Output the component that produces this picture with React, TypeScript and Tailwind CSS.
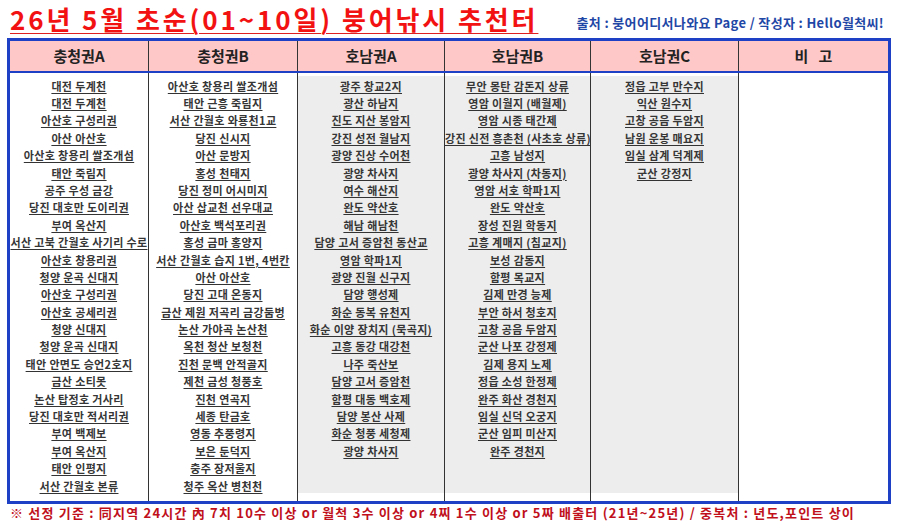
import React from "react";

const colA = [
  "대전 두계천",
  "대전 두계천",
  "아산호 구성리권",
  "아산 아산호",
  "아산호 창용리 쌀조개섬",
  "태안 죽림지",
  "공주 우성 금강",
  "당진 대호만 도이리권",
  "부여 옥산지",
  "서산 고북 간월호 사기리 수로",
  "아산호 창용리권",
  "청양 운곡 신대지",
  "아산호 구성리권",
  "아산호 공세리권",
  "청양 신대지",
  "청양 운곡 신대지",
  "태안 안면도 승언2호지",
  "금산 소티못",
  "논산 탑정호 거사리",
  "당진 대호만 적서리권",
  "부여 백제보",
  "부여 옥산지",
  "태안 인평지",
  "서산 간월호 본류",
];

const colB = [
  "아산호 창용리 쌀조개섬",
  "태안 근흥 죽림지",
  "서산 간월호 와룡천1교",
  "당진 신시지",
  "아산 문방지",
  "홍성 천태지",
  "당진 정미 어시미지",
  "아산 삽교천 선우대교",
  "아산호 백석포리권",
  "홍성 금마 홍양지",
  "서산 간월호 습지 1번, 4번칸",
  "아산 아산호",
  "당진 고대 온동지",
  "금산 제원 저곡리 금강둠벙",
  "논산 가야곡 논산천",
  "옥천 청산 보청천",
  "진천 문백 안적골지",
  "제천 금성 청풍호",
  "진천 연곡지",
  "세종 탄금호",
  "영동 추풍령지",
  "보은 둔덕지",
  "충주 장저울지",
  "청주 옥산 병천천",
];

const colC = [
  "광주 창교2지",
  "광산 하남지",
  "진도 지산 봉암지",
  "강진 성전 월남지",
  "광양 진상 수어천",
  "광양 차사지",
  "여수 해산지",
  "완도 약산호",
  "해남 해남천",
  "담양 고서 증암천 동산교",
  "영암 학파1지",
  "광양 진월 신구지",
  "담양 행성제",
  "화순 동복 유천지",
  "화순 이양 장치지 (묵곡지)",
  "고흥 동강 대강천",
  "나주 죽산보",
  "담양 고서 증암천",
  "함평 대동 백호제",
  "담양 봉산 사제",
  "화순 청풍 세청제",
  "광양 차사지",
];

const colD = [
  "무안 몽탄 감돈지 상류",
  "영암 이월지 (배월제)",
  "영암 시종 태간제",
  "강진 신전 흥촌천 (사초호 상류)",
  "고흥 남성지",
  "광양 차사지 (차동지)",
  "영암 서호 학파1지",
  "완도 약산호",
  "장성 진원 학동지",
  "고흥 계매지 (침교지)",
  "보성 감동지",
  "함평 목교지",
  "김제 만경 능제",
  "부안 하서 청호지",
  "고창 공음 두암지",
  "군산 나포 강정제",
  "김제 용지 노제",
  "정읍 소성 한정제",
  "완주 화산 경천지",
  "임실 신덕 오궁지",
  "군산 임피 미산지",
  "완주 경천지",
];

const colE = [
  "정읍 고부 만수지",
  "익산 원수지",
  "고창 공음 두암지",
  "남원 운봉 매요지",
  "임실 삼계 덕계제",
  "군산 강정지",
];

const font = { fontFamily: '"Noto Sans CJK KR", "Noto Sans", sans-serif' };

function Cell({ items, gray, first }: { items: string[]; gray?: boolean; first?: boolean }) {
  return (
    <div className={`flex flex-col pt-[3px] pb-[8px] ${first ? "" : "border-l border-[#333]"}`}>
      <div className={`flex-1 flex flex-col ${gray ? "bg-[#ededed]" : "bg-white"}`}>
        {items.map((t, i) => (
          <div key={i} className="h-[17.4px] leading-[17.4px] text-center whitespace-nowrap">
            <span
              className={`underline decoration-[#333] underline-offset-[2px] font-bold text-[#363636] ${
                t.length > 18 ? "text-[10.4px] tracking-[-0.3px]" : "text-[11px] tracking-[0.35px]"
              }`}
            >
              {t}
            </span>
          </div>
        ))}
      </div>
    </div>
  );
}

export default function App() {
  const headers = ["충청권A", "충청권B", "호남권A", "호남권B", "호남권C"];
  return (
    <div className="w-[900px] h-[529px] bg-white overflow-hidden" style={font}>
      <div className="flex items-end h-[38px]">
        <div className="ml-[10px] text-[26px] leading-[38px] font-bold text-[#f21212] tracking-[2.9px] underline decoration-[#e02020] decoration-1 underline-offset-[3px] whitespace-nowrap">
          26년 5월 초순(01~10일) 붕어낚시 추천터
        </div>
        <div className="ml-auto mr-[16px] mb-[7px] text-[13px] leading-[16px] font-bold tracking-[0.35px] text-[#1f47a6] whitespace-nowrap">
          출처 : 붕어어디서나와요 Page / 작성자 : Hello월척씨!
        </div>
      </div>
      <div className="ml-[7px] w-[884px] h-[466px] border-[3px] border-[#1e40c4] flex flex-col">
        <div className="grid grid-cols-[138px_149px_147px_146px_148px_150px] h-[33px] bg-[#ffc8c8] border-b-2 border-[#1e40c4]">
          {headers.map((h, i) => (
            <div
              key={h}
              className={`flex items-center justify-center text-[15px] font-bold text-[#222] ${
                i === 0 ? "" : "border-l border-[#333]"
              }`}
            >
              {h}
            </div>
          ))}
          <div className="flex items-center justify-center text-[15px] font-bold text-[#222] border-l border-[#333] whitespace-pre">
            비   고
          </div>
        </div>
        <div className="flex-1 grid grid-cols-[138px_149px_147px_146px_148px_150px]">
          <Cell items={colA} first />
          <Cell items={colB} />
          <Cell items={colC} gray />
          <Cell items={colD} gray />
          <Cell items={colE} gray />
          <Cell items={[]} />
        </div>
      </div>
      <div className="ml-[10px] mt-[1px] text-[13px] leading-[16px] font-bold tracking-[1.2px] text-[#c0101c] whitespace-nowrap">
        ※ 선정 기준 : 同지역 24시간 內 7치 10수 이상 or 월척 3수 이상 or 4찌 1수 이상 or 5짜 배출터 (21년~25년) / 중복처 : 년도,포인트 상이
      </div>
    </div>
  );
}
